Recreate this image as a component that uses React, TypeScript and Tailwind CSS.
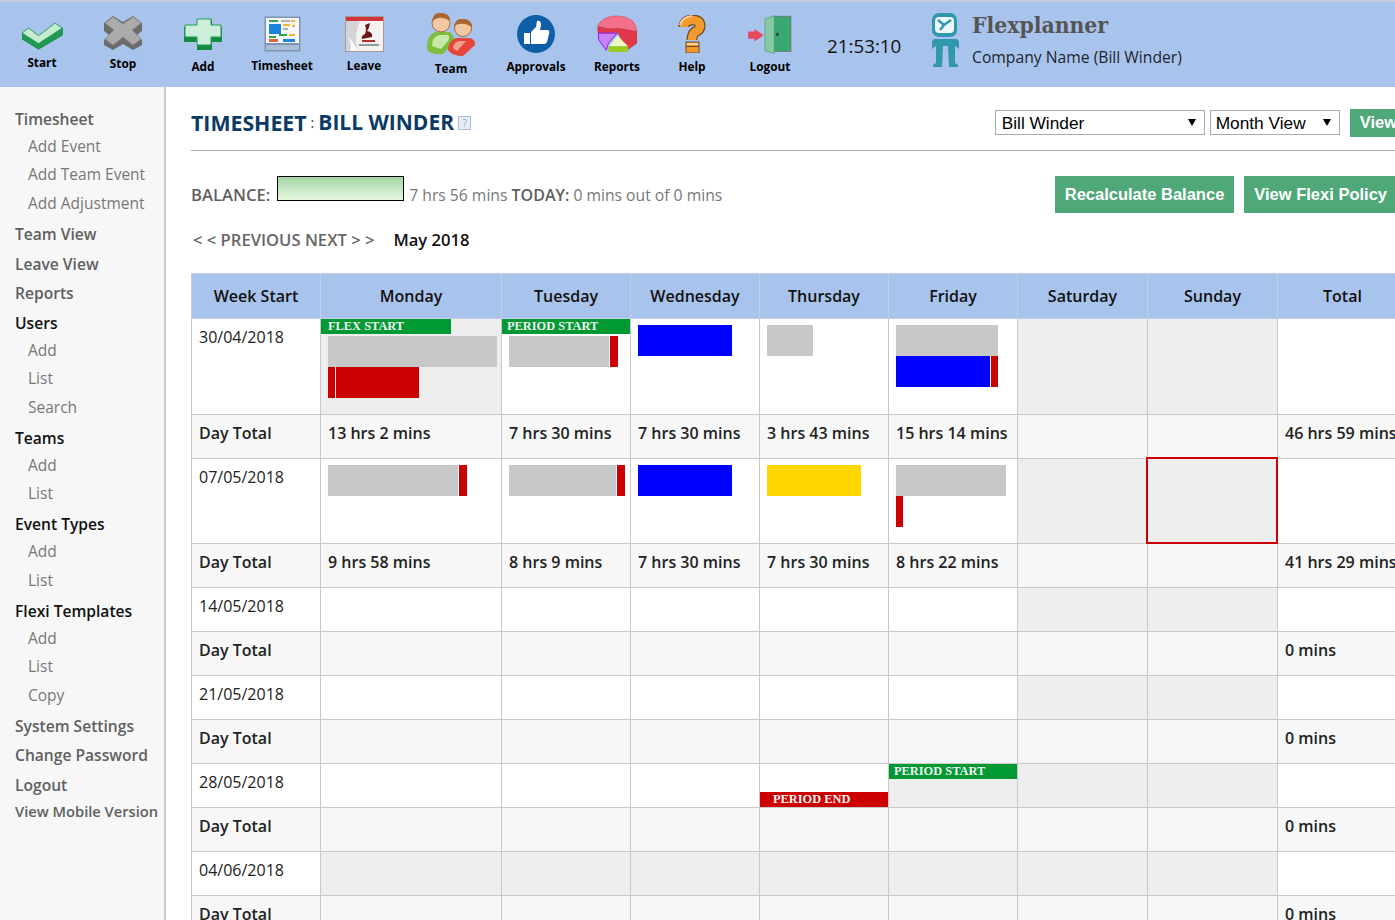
import type { ReactNode } from "react";

const GRID = "border border-[#c8c8c8]";

function StartIcon() {
  return (
    <svg width="41" height="28" viewBox="65 67 124 84">
      <path d="M65 100V118L115 149L188 106V85L115 132Z" fill="#1f9a50" stroke="#157a3c" strokeWidth="2" />
      <path d="M65 100L85 85L115 108L165 70L187 85L115 132Z" fill="#c5ecd0" stroke="#2a9e5c" strokeWidth="3" />
    </svg>
  );
}

function StopIcon() {
  return (
    <svg width="38" height="34" viewBox="0 0 38 34">
      <path d="M0 7L9 0L19 6L29 0L38 7V15L33 19L38 24V29L29 34L19 28L9 34L0 29V24L5 19L0 15Z" fill="#6c6c6c" />
      <path d="M1 7L9 1L19 8L29 1L37 7L28 14L37 23L29 29L19 21L9 29L1 23L10 14Z" fill="#ababab" stroke="#8c8c8c" />
    </svg>
  );
}

function AddIcon() {
  return (
    <svg width="38" height="32" viewBox="0 0 38 32">
      <path d="M0 9H13V2H28V9H38V24H28V32H13V24H0Z" fill="#128a44" />
      <path d="M1 7H13V1H27V7H37V19H27V27H13V19H1Z" fill="#cdeedb" stroke="#1f9e58" />
    </svg>
  );
}

function TimesheetIcon() {
  return (
    <svg width="37" height="36" viewBox="0 0 37 36">
      <rect x="0.5" y="0.5" width="36" height="35" fill="#7f94b4" />
      <rect x="2" y="2" width="33" height="25" fill="#f4f6f8" />
      <rect x="5" y="4" width="9" height="2" fill="#2fa84f" />
      <rect x="17" y="4" width="9" height="2" fill="#b0b0b0" />
      <rect x="27" y="4" width="4" height="2" fill="#f2b632" />
      <rect x="5" y="8" width="12" height="10" fill="#1c84dc" />
      <rect x="19" y="8" width="7" height="2" fill="#f2b632" />
      <rect x="28" y="9" width="3" height="2" fill="#f2b632" />
      <rect x="19" y="12" width="5" height="2" fill="#b0b0b0" />
      <rect x="5" y="20" width="7" height="2" fill="#2fa84f" />
      <rect x="15" y="18" width="8" height="2" fill="#2fa84f" />
      <rect x="25" y="18" width="6" height="2" fill="#f2b632" />
      <rect x="5" y="23" width="9" height="3" fill="#d9663a" />
      <rect x="19" y="23" width="12" height="3" fill="#1c84dc" />
      <rect x="2" y="29" width="33" height="5" fill="#a9bcd6" />
    </svg>
  );
}

function LeaveIcon() {
  return (
    <svg width="39" height="36" viewBox="0 0 39 36">
      <rect x="0" y="0" width="39" height="36" fill="#a89a90" />
      <rect x="1" y="1" width="37" height="4" fill="#d0343a" />
      <rect x="1" y="5" width="37" height="30" fill="#f4f2f0" />
      <path d="M1 5H15Q9 18 12 34L5 35H1Z" fill="#d4d4d4" />
      <path d="M12 34Q8 24 3 22Q8 30 5 35Z" fill="#fafafa" />
      <path d="M20 9L25 7Q24 13 22 15Q28 16 27 21L17 23Q16 20 20 18Q22 13 20 9Z" fill="#6a1414" />
      <rect x="17" y="24" width="13" height="2" fill="#b03030" />
      <rect x="14" y="28" width="20" height="2" fill="#999" />
    </svg>
  );
}

function TeamIcon() {
  return (
    <svg width="50" height="44" viewBox="0 0 50 44">
      <path d="M1 38Q0 24 9 20H24Q29 24 28 30L17 42Q5 43 1 38Z" fill="#7dbd40" />
      <path d="M6 34Q6 25 13 23H22Q24 26 22 29L15 37Z" fill="#c8e8a8" />
      <circle cx="15" cy="11" r="9" fill="#f2c8a0" stroke="#a86a3a" />
      <path d="M6 10Q7 0 15 1Q24 1 24 9Q18 5 12 6Q8 7 6 10Z" fill="#a8662e" />
      <path d="M22 38Q22 29 30 26H44Q50 28 49 33L37 44Q26 44 22 38Z" fill="#e5463c" />
      <path d="M27 36Q27 31 33 29H40L31 39Z" fill="#f4a08c" />
      <circle cx="37" cy="16" r="8.5" fill="#f2c8a0" stroke="#a86a3a" />
      <path d="M28 15Q29 6 37 7Q46 7 46 15Q40 11 34 12Q30 12 28 15Z" fill="#a8662e" />
    </svg>
  );
}

function ApprovalsIcon() {
  return (
    <svg width="38" height="38" viewBox="0 0 38 38">
      <circle cx="19" cy="19" r="19" fill="#0f5ea8" />
      <rect x="7" y="18" width="6" height="11" fill="#fff" />
      <path d="M14 17L19 12L20 6Q24 5 24 10L23 15H31Q33 16 32 19L30 27Q29 29 27 29H14Z" fill="#fff" />
    </svg>
  );
}

function ReportsIcon() {
  return (
    <svg width="40" height="38" viewBox="350 45 122 115">
      <path d="M352 80Q352 95 354 100L412 98L445 150L472 130V95L415 75Q380 88 352 80Z" fill="#e03848" stroke="#a82030" />
      <path d="M352 78Q365 48 410 47Q470 50 472 95L415 85Q380 90 352 78Z" fill="#f2708a" stroke="#b82438" />
      <path d="M354 100H412L385 130L378 152L355 120Z" fill="#cc80fa" stroke="#8420e0" strokeWidth="3" />
      <path d="M412 108L445 140H388Z" fill="#eefac0" />
      <path d="M385 140H445V157H385Z" fill="#98cc20" />
    </svg>
  );
}

function HelpIcon() {
  return (
    <svg width="29" height="38" viewBox="0 0 29 38">
      <path d="M6 12Q6 5 15 5Q22 5 22 11Q22 15 17 17Q14 19 14 25" fill="none" stroke="#6e4a24" strokeWidth="11" />
      <path d="M6 12Q6 5 15 5Q22 5 22 11Q22 15 17 17Q14 19 14 25" fill="none" stroke="#f29a2e" strokeWidth="8.5" />
      <path d="M2 10Q4 2 14 1" fill="none" stroke="#f8d0a0" strokeWidth="2" />
      <rect x="8" y="27" width="13" height="11" fill="#f29a2e" stroke="#6e4a24" />
      <rect x="8" y="31" width="13" height="1" fill="#6e4a24" />
      <rect x="9" y="28" width="11" height="2" fill="#f8d0a0" />
    </svg>
  );
}

function LogoutIcon() {
  return (
    <svg width="44" height="39" viewBox="805 42 132 118">
      <path d="M805 92H824V84L852 103L824 122V114H805Z" fill="#e8485c" />
      <rect x="880" y="46" width="54" height="106" fill="#3aa873" stroke="#5f7f74" strokeWidth="3" />
      <path d="M856 54L884 44V158L856 150Z" fill="#86cba4" stroke="#4c8f6c" strokeWidth="2" />
      <rect x="889" y="96" width="9" height="9" fill="#22543c" />
    </svg>
  );
}

function LogoIcon() {
  return (
    <svg width="27" height="54" viewBox="0 0 27 54">
      <rect x="0" y="0" width="25" height="24" rx="7" fill="#2f98ad" />
      <rect x="3" y="4" width="19" height="16" rx="4" fill="#eef8fa" />
      <path d="M6 7L12 12L19 7M12 12L8 17" fill="none" stroke="#2f98ad" strokeWidth="2.5" />
      <path d="M3 26H24Q27 26 27 30V36L23 33V50L26 52V54H17L16 33H11L10 54H1V52L4 50V33L0 36V30Q0 26 3 26Z" fill="#2f98ad" />
    </svg>
  );
}

const toolbar = [
  { label: "Start", box: "w-[84px] pt-[20px]", gap: "mt-[4px]", icon: <StartIcon /> },
  { label: "Stop", box: "w-[78px] pt-[14px]", gap: "mt-[5px]", icon: <StopIcon /> },
  { label: "Add", box: "w-[82px] pt-[16px]", gap: "mt-[8px]", icon: <AddIcon /> },
  { label: "Timesheet", box: "w-[76px] pt-[14px]", gap: "mt-[5px]", icon: <TimesheetIcon /> },
  { label: "Leave", box: "w-[88px] pt-[14px]", gap: "mt-[5px]", icon: <LeaveIcon /> },
  { label: "Team", box: "w-[86px] pt-[10px]", gap: "mt-[4px]", icon: <TeamIcon /> },
  { label: "Approvals", box: "w-[84px] pt-[13px]", gap: "mt-[5px]", icon: <ApprovalsIcon /> },
  { label: "Reports", box: "w-[78px] pt-[13px]", gap: "mt-[5px]", icon: <ReportsIcon /> },
  { label: "Help", box: "w-[72px] pt-[13px]", gap: "mt-[5px]", icon: <HelpIcon /> },
  { label: "Logout", box: "w-[84px] pt-[13px]", gap: "mt-[4px]", icon: <LogoutIcon /> },
];

function Header() {
  return (
    <header className="flex h-[87px] shrink-0 items-start border-t-2 border-[#c4cad8] bg-[#a9c4ec]">
      {toolbar.map((t) => (
        <div key={t.label} className={`flex shrink-0 flex-col items-center ${t.box}`}>
          {t.icon}
          <span className={`text-[11.8px] leading-4 font-bold text-black ${t.gap}`}>{t.label}</span>
        </div>
      ))}
      <div className="ml-[15px] w-[105px] pt-[32px] text-[18.8px] leading-6 text-[#111]">21:53:10</div>
      <div className="pt-[11px]">
        <LogoIcon />
      </div>
      <div className="ml-[13px] pt-[7px]">
        <div className="font-['DejaVu_Serif_Condensed','DejaVu_Serif',serif] text-[22.7px] leading-8 font-bold text-[#555]">
          Flexplanner
        </div>
        <div className="mt-[4px] text-[15.7px] leading-6 text-[#1c2430]">Company Name (Bill Winder)</div>
      </div>
    </header>
  );
}

const nav = [
  { label: "Timesheet", subs: ["Add Event", "Add Team Event", "Add Adjustment"] },
  { label: "Team View" },
  { label: "Leave View" },
  { label: "Reports" },
  { label: "Users", dark: true, subs: ["Add", "List", "Search"] },
  { label: "Teams", dark: true, subs: ["Add", "List"] },
  { label: "Event Types", dark: true, subs: ["Add", "List"] },
  { label: "Flexi Templates", dark: true, subs: ["Add", "List", "Copy"] },
  { label: "System Settings" },
  { label: "Change Password" },
  { label: "Logout" },
];

function Sidebar() {
  return (
    <aside className="w-[166px] shrink-0 border-r-2 border-[#cccccc] bg-[#f7f7f7] pt-[18px] pl-[15px]">
      {nav.map((n) => (
        <div key={n.label}>
          <div className={`h-[29.7px] text-[15.6px] leading-[29.7px] font-semibold ${n.dark ? "text-[#111]" : "text-[#606060]"}`}>
            {n.label}
          </div>
          {n.subs && (
            <div className="-mt-[3px] mb-[2.75px] pl-[13px]">
              {n.subs.map((s) => (
                <div key={s} className="h-[28.5px] text-[15.5px] leading-[28.5px] text-[#777]">
                  {s}
                </div>
              ))}
            </div>
          )}
        </div>
      ))}
      <div className="-mt-[2px] text-[14.7px] leading-6 font-semibold text-[#606060]">View Mobile Version</div>
    </aside>
  );
}

function Picker({ value, width, pad, options }: { value: string; width: string; pad: string; options: string[] }) {
  return (
    <div className={`relative h-[25px] ${width}`}>
      <select
        defaultValue={value}
        className={`h-full w-full appearance-none border border-[#aaa] bg-white font-['Liberation_Sans',sans-serif] text-[17.3px] text-black ${pad}`}
      >
        {options.map((o) => (
          <option key={o}>{o}</option>
        ))}
      </select>
      <span className="absolute top-[9px] right-[9px] h-0 w-0 border-x-[4px] border-t-[7px] border-x-transparent border-t-black" />
    </div>
  );
}

function GreenButton({ children, className }: { children: ReactNode; className: string }) {
  return (
    <button className={`bg-[#4fa878] px-[10px] font-['Liberation_Sans',sans-serif] font-bold text-white ${className}`}>
      {children}
    </button>
  );
}

type Seg = { color: string; width: string };

const GREY = "bg-[#c8c8c8]";
const RED = "bg-[#cc0000]";
const BLUE = "bg-[#0000ff]";
const YELLOW = "bg-[#ffd700]";

function Bars({ rows }: { rows: Seg[][] }) {
  return (
    <div>
      {rows.map((row, i) => (
        <div key={i} className="flex h-[31px] gap-px">
          {row.map((s, j) => (
            <div key={j} className={`h-full ${s.color} ${s.width}`} />
          ))}
        </div>
      ))}
    </div>
  );
}

function Banner({ text, color, pad }: { text: string; color: string; pad: string }) {
  return (
    <div className={`h-[15px] font-['Liberation_Serif',serif] text-[12.4px] leading-[14px] font-bold text-[#f3f3f3] ${color} ${pad}`}>
      {text}
    </div>
  );
}

function Cell({ grey, children }: { grey?: boolean; children?: ReactNode }) {
  return <td className={`relative p-0 align-top ${GRID} ${grey ? "bg-[#eeeeee]" : "bg-white"}`}>{children}</td>;
}

function Padded({ children }: { children: ReactNode }) {
  return <div className="pt-[6px] pl-[7px]">{children}</div>;
}

function TotalRow({ values, total }: { values: string[]; total: string }) {
  const days = [0, 1, 2, 3, 4, 5, 6];
  return (
    <tr className="h-[44px] bg-[#f7f7f7] text-[16px] leading-[22px] font-semibold text-[#222]">
      <td className={`${GRID} px-[7px] pt-[7px] align-top`}>Day Total</td>
      {days.map((d) => (
        <td key={d} className={`${GRID} px-[7px] pt-[7px] align-top whitespace-nowrap`}>
          {values[d]}
        </td>
      ))}
      <td className={`${GRID} px-[7px] pt-[7px] align-top whitespace-nowrap`}>{total}</td>
    </tr>
  );
}

function DateCell({ date }: { date: string }) {
  return <td className={`${GRID} bg-white px-[7px] pt-[7px] align-top text-[16px] leading-[22px] text-[#222]`}>{date}</td>;
}

const dayNames = ["Week Start", "Monday", "Tuesday", "Wednesday", "Thursday", "Friday", "Saturday", "Sunday", "Total"];

function MonthTable() {
  return (
    <table className="w-[1216px] table-fixed border-collapse">
      <colgroup>
        <col className="w-[129px]" />
        <col className="w-[181px]" />
        <col className="w-[129px]" />
        <col className="w-[129px]" />
        <col className="w-[129px]" />
        <col className="w-[129px]" />
        <col className="w-[130px]" />
        <col className="w-[130px]" />
        <col className="w-[130px]" />
      </colgroup>
      <thead>
        <tr className="h-[45px] bg-[#a9c4ec]">
          {dayNames.map((d) => (
            <th key={d} className="border border-[#c3cfe4] text-center text-[16px] font-semibold text-[#111]">
              {d}
            </th>
          ))}
        </tr>
      </thead>
      <tbody>
        <tr className="h-[96px]">
          <DateCell date="30/04/2018" />
          <Cell grey>
            <div className="w-[130px]">
              <Banner text="FLEX START" color="bg-[#009933]" pad="pl-[7px]" />
            </div>
            <div className="pt-[2px] pl-[7px]">
              <Bars
                rows={[
                  [{ color: GREY, width: "w-[169px]" }],
                  [
                    { color: RED, width: "w-[7px]" },
                    { color: RED, width: "w-[83px]" },
                  ],
                ]}
              />
            </div>
          </Cell>
          <Cell>
            <Banner text="PERIOD START" color="bg-[#009933]" pad="pl-[5px]" />
            <div className="pt-[2px] pl-[7px]">
              <Bars
                rows={[
                  [
                    { color: GREY, width: "w-[100px]" },
                    { color: RED, width: "w-[8px]" },
                  ],
                ]}
              />
            </div>
          </Cell>
          <Cell>
            <Padded>
              <Bars rows={[[{ color: BLUE, width: "w-[94px]" }]]} />
            </Padded>
          </Cell>
          <Cell>
            <Padded>
              <Bars rows={[[{ color: GREY, width: "w-[46px]" }]]} />
            </Padded>
          </Cell>
          <Cell>
            <Padded>
              <Bars
                rows={[
                  [{ color: GREY, width: "w-[102px]" }],
                  [
                    { color: BLUE, width: "w-[94px]" },
                    { color: RED, width: "w-[7px]" },
                  ],
                ]}
              />
            </Padded>
          </Cell>
          <Cell grey />
          <Cell grey />
          <Cell />
        </tr>
        <TotalRow
          values={["13 hrs 2 mins", "7 hrs 30 mins", "7 hrs 30 mins", "3 hrs 43 mins", "15 hrs 14 mins", "", ""]}
          total="46 hrs 59 mins"
        />
        <tr className="h-[85px]">
          <DateCell date="07/05/2018" />
          <Cell>
            <Padded>
              <Bars
                rows={[
                  [
                    { color: GREY, width: "w-[130px]" },
                    { color: RED, width: "w-[8px]" },
                  ],
                ]}
              />
            </Padded>
          </Cell>
          <Cell>
            <Padded>
              <Bars
                rows={[
                  [
                    { color: GREY, width: "w-[107px]" },
                    { color: RED, width: "w-[8px]" },
                  ],
                ]}
              />
            </Padded>
          </Cell>
          <Cell>
            <Padded>
              <Bars rows={[[{ color: BLUE, width: "w-[94px]" }]]} />
            </Padded>
          </Cell>
          <Cell>
            <Padded>
              <Bars rows={[[{ color: YELLOW, width: "w-[94px]" }]]} />
            </Padded>
          </Cell>
          <Cell>
            <Padded>
              <Bars rows={[[{ color: GREY, width: "w-[110px]" }], [{ color: RED, width: "w-[7px]" }]]} />
            </Padded>
          </Cell>
          <Cell grey />
          <Cell grey>
            <div className="absolute -top-[2px] -left-[2px] h-[87px] w-[132px] border-2 border-[#cc0000]" />
          </Cell>
          <Cell />
        </tr>
        <TotalRow
          values={["9 hrs 58 mins", "8 hrs 9 mins", "7 hrs 30 mins", "7 hrs 30 mins", "8 hrs 22 mins", "", ""]}
          total="41 hrs 29 mins"
        />
        <tr className="h-[44px]">
          <DateCell date="14/05/2018" />
          <Cell />
          <Cell />
          <Cell />
          <Cell />
          <Cell />
          <Cell grey />
          <Cell grey />
          <Cell />
        </tr>
        <TotalRow values={[]} total="0 mins" />
        <tr className="h-[44px]">
          <DateCell date="21/05/2018" />
          <Cell />
          <Cell />
          <Cell />
          <Cell />
          <Cell />
          <Cell grey />
          <Cell grey />
          <Cell />
        </tr>
        <TotalRow values={[]} total="0 mins" />
        <tr className="h-[44px]">
          <DateCell date="28/05/2018" />
          <Cell />
          <Cell />
          <Cell />
          <Cell>
            <div className="pt-[28px]">
              <Banner text="PERIOD END" color="bg-[#cc0000]" pad="pl-[13px]" />
            </div>
          </Cell>
          <Cell grey>
            <Banner text="PERIOD START" color="bg-[#009933]" pad="pl-[5px]" />
          </Cell>
          <Cell grey />
          <Cell grey />
          <Cell />
        </tr>
        <TotalRow values={[]} total="0 mins" />
        <tr className="h-[44px]">
          <DateCell date="04/06/2018" />
          <Cell grey />
          <Cell grey />
          <Cell grey />
          <Cell grey />
          <Cell grey />
          <Cell grey />
          <Cell grey />
          <Cell />
        </tr>
        <TotalRow values={[]} total="0 mins" />
      </tbody>
    </table>
  );
}

export default function App() {
  return (
    <div className="flex h-[920px] w-[1395px] flex-col overflow-hidden bg-white font-['Open_Sans',sans-serif]">
      <Header />
      <div className="flex min-h-0 flex-1">
        <Sidebar />
        <main className="min-w-0 flex-1 overflow-hidden pl-[25px]">
          <div className="w-[1216px]">
            <div className="flex h-[64px] items-center justify-between border-b border-[#aaa] pt-[8px]">
              <h1 className="flex items-center text-[21.3px] font-bold text-[#0b3a66]">
                <span>TIMESHEET</span>
                <span className="mx-[4px] text-[14px] font-normal text-[#444]">:</span>
                <span className="text-[21px]">BILL WINDER</span>
                <span className="ml-[4px] flex h-[14px] w-[13px] items-center justify-center border border-[#a9bcd6] bg-[#e8eef6] text-[10px] leading-none font-normal text-[#8ea2bd]">
                  ?
                </span>
              </h1>
              <div className="flex items-center gap-[5px]">
                <Picker value="Bill Winder" width="w-[210px]" pad="pl-[6px]" options={["Bill Winder"]} />
                <Picker value="Month View" width="w-[130px]" pad="pl-[5px]" options={["Month View", "Week View"]} />
                <GreenButton className="ml-[5px] h-[28px] text-[16.5px]">View</GreenButton>
              </div>
            </div>
            <div className="mt-[25px] flex h-[37px] items-start justify-between">
              <div className="flex items-start text-[15.7px] leading-[24px] text-[#777]">
                <span className="mt-[7px] text-[16.6px] font-semibold text-[#606060]">BALANCE:</span>
                <span className="mr-[5px] ml-[7px] h-[25px] w-[127px] border border-black bg-linear-to-b from-[#a5d6a5] to-[#e6f7e0]" />
                <span className="mt-[7px]">
                  7 hrs 56 mins <b className="text-[16px] font-semibold text-[#606060]">TODAY:</b> 0 mins out of 0 mins
                </span>
              </div>
              <div className="mr-[10px] flex gap-[10px]">
                <GreenButton className="h-[37px] text-[16.5px]">Recalculate Balance</GreenButton>
                <GreenButton className="h-[37px] text-[16.5px]">View Flexi Policy</GreenButton>
              </div>
            </div>
            <div className="mt-[16px] flex h-[22px] items-center pl-[2px] text-[16.6px] font-semibold">
              <span className="text-[#666]">&lt; &lt; PREVIOUS NEXT &gt; &gt;</span>
              <span className="ml-[19px] text-[#111]">May 2018</span>
            </div>
            <div className="mt-[22px]">
              <MonthTable />
            </div>
          </div>
        </main>
      </div>
    </div>
  );
}
